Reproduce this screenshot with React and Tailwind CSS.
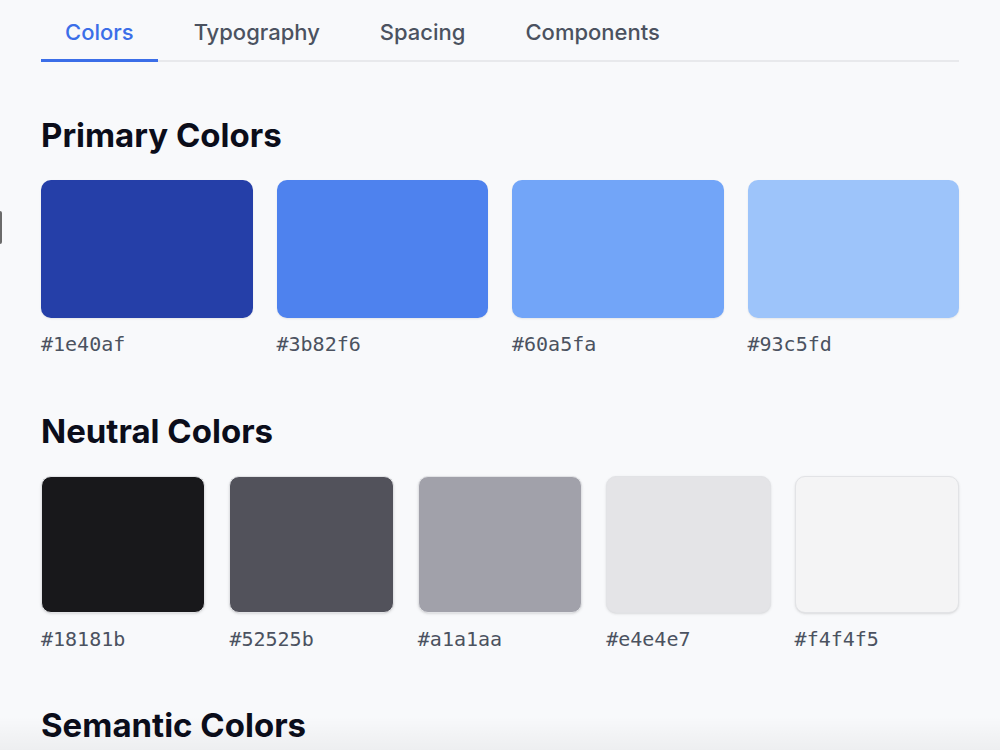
import { useState } from "react";

const tabs = ["Colors", "Typography", "Spacing", "Components"];

// shown colours are slightly shifted from the hex labels, as in the screenshot
const primaryColors = [
  { hex: "#1e40af", shown: "#253fa8" },
  { hex: "#3b82f6", shown: "#4e82ee" },
  { hex: "#60a5fa", shown: "#72a5f8" },
  { hex: "#93c5fd", shown: "#9dc4fa" },
];
const neutralColors = [
  { hex: "#18181b", shown: "#18181b" },
  { hex: "#52525b", shown: "#52525b" },
  { hex: "#a1a1aa", shown: "#a1a1aa" },
  { hex: "#e4e4e7", shown: "#e4e4e7" },
  { hex: "#f4f4f5", shown: "#f4f4f5" },
];

function Swatch({ color, height, bordered }) {
  return (
    <div>
      <div
        className={
          bordered
            ? "rounded-[10px] border border-[#e2e3e6] shadow-sm"
            : "rounded-[10px] shadow-[0_1px_2px_rgba(0,0,0,0.08)]"
        }
        style={{ backgroundColor: color.shown, height }}
      />
      <div className="mt-3 font-['DejaVu_Sans_Mono',monospace] text-[20px] leading-7 text-[#4b5260]">
        {color.hex}
      </div>
    </div>
  );
}

export default function App() {
  const [active, setActive] = useState("Colors");

  return (
    <div className="relative min-h-[750px] overflow-hidden bg-[#f8f9fb] font-['Inter',sans-serif]">
      {/* scroll marker on the left edge */}
      <div className="absolute left-0 top-[211px] h-[33px] w-[2px] rounded-r bg-[#6b6b6b]" />

      <div className="px-[41px]">
        <nav className="flex gap-3 border-b-2 border-[#e8e9ec]">
          {tabs.map((tab) => (
            <button
              key={tab}
              onClick={() => setActive(tab)}
              className={
                tab === active
                  ? "-mb-[2px] border-b-[3px] border-[#3b6ee8] px-6 pt-[18px] pb-[13px] text-[22px] leading-7 font-medium text-[#3b6ee8]"
                  : "-mb-[2px] border-b-[3px] border-transparent px-6 pt-[18px] pb-[13px] text-[22px] leading-7 font-medium text-[#4b5260]"
              }
            >
              {tab}
            </button>
          ))}
        </nav>

        <section className="mt-[53px]">
          <h2 className="mb-[25px] text-[33px] leading-10 font-bold text-[#0b0d1a]">
            Primary Colors
          </h2>
          <div className="grid grid-cols-4 gap-6">
            {primaryColors.map((c) => (
              <Swatch key={c.hex} color={c} height={138} />
            ))}
          </div>
        </section>

        <section className="mt-[53px]">
          <h2 className="mb-[25px] text-[33px] leading-10 font-bold text-[#0b0d1a]">
            Neutral Colors
          </h2>
          <div className="grid grid-cols-5 gap-6">
            {neutralColors.map((c) => (
              <Swatch key={c.hex} color={c} height={137} bordered />
            ))}
          </div>
        </section>

        <section className="mt-[52px]">
          <h2 className="mb-[26px] text-[33px] leading-10 font-bold text-[#0b0d1a]">
            Semantic Colors
          </h2>
        </section>
      </div>

      {/* bottom fade */}
      <div className="pointer-events-none absolute inset-x-0 bottom-0 h-[55px] bg-gradient-to-b from-transparent to-[rgba(0,0,0,0.07)]" />
    </div>
  );
}
